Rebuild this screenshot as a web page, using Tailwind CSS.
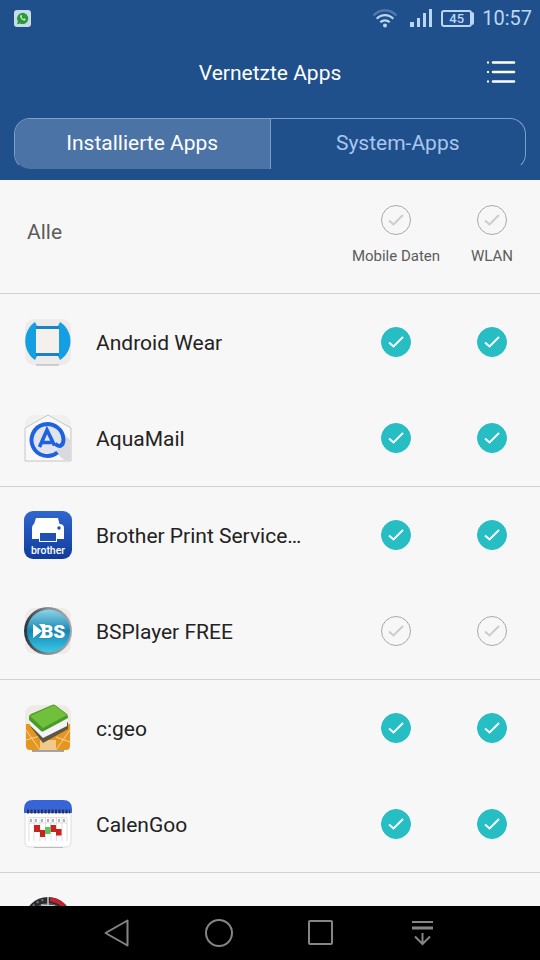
<!DOCTYPE html>
<html lang="de">
<head>
  <meta charset="UTF-8" />
  <meta name="viewport" content="width=device-width, initial-scale=1.0" />
  <title>Vernetzte Apps</title>
  <script src="https://cdn.jsdelivr.net/npm/@tailwindcss/browser@4"></script>
</head>
<body class="flex h-screen flex-col bg-[#f7f7f7] font-[Roboto,sans-serif] text-[#222222]">

  <!-- Header -->
  <header class="bg-[#1f508b] pb-[10px]">
    <!-- Status bar -->
    <div class="flex h-9 items-center justify-between pl-[14px] pr-2">
      <svg class="size-[17px]" viewBox="0 0 17 17">
        <rect width="17" height="17" rx="3" fill="#c8dcea" />
        <path d="M3 14.200 3.900 11.400A5.600 5.600 0 1 1 6 13.400Z" fill="#2b9a3a" />
        <path d="M6.300 5.500c-.6 2.300 2 5.200 4.600 5l.8-1.300-1.500-.9-.9.700c-.9-.4-1.500-1-1.800-1.900l.6-.8-.7-1.500Z" fill="#d9f0dc" />
      </svg>
      <div class="flex items-center gap-2 text-[#bcd6f7]">
        <svg class="mr-1 h-[19px] w-[26px]" viewBox="0 0 26 19" fill="none" stroke="currentColor" stroke-width="2.200">
          <path d="M1.500 6.500C8-.3 18-.3 24.500 6.500" stroke="#5379ad" />
          <path d="M4.700 9.800C9.500 5 16.500 5 21.300 9.800M8.300 13.300c2.700-2.700 6.700-2.700 9.400 0" />
          <circle cx="13" cy="16.500" r="2" fill="currentColor" stroke="none" />
        </svg>
        <svg class="h-[18px] w-[23px]" viewBox="0 0 23 18" fill="currentColor">
          <path d="M0 13h4v5H0zM7 9h3v9H7zM13 4h3v14h-3zM19 0h3v18h-3z" />
        </svg>
        <div class="flex items-center">
          <span class="flex h-[17px] w-[31px] items-center justify-center rounded-[3px] border-2 border-current text-[13px] leading-none font-medium">45</span>
          <span class="h-[13px] w-[2px] rounded-r bg-current"></span>
        </div>
        <span class="text-[20px] leading-6">10:57</span>
      </div>
    </div>

    <!-- Title bar -->
    <div class="grid h-[72px] grid-cols-[1fr_auto_1fr] items-center px-6">
      <h1 class="col-start-2 pt-[3px] text-[21px] text-white">Vernetzte Apps</h1>
      <button class="justify-self-end" aria-label="Menü">
        <svg class="h-6 w-[30px]" viewBox="0 0 30 24" fill="none" stroke="#fff" stroke-width="2.600">
          <path d="M1 2.500h2M1 12h2M1 21.500h2" stroke-width="2.200" />
          <path d="M7 2.500h21M7 12h21M7 21.500h21" stroke-linecap="round" />
        </svg>
      </button>
    </div>

    <!-- Tabs -->
    <div class="mx-[14px] mt-[10px] flex h-[52px] overflow-hidden rounded-2xl border border-[#7f9fcb] border-b-transparent text-[21px]" role="tablist">
      <button class="flex-1 border-r border-[#7f9fcb] bg-[#4b73a5] text-white" role="tab" aria-selected="true">Installierte Apps</button>
      <button class="flex-1 text-[#a9c6ee]" role="tab" aria-selected="false">System-Apps</button>
    </div>
  </header>

  <svg class="hidden">
    <symbol id="tick" viewBox="0 0 30 30">
      <path d="m8 15.500 4.500 4L22 10" fill="none" stroke="currentColor" stroke-width="2" />
    </symbol>
  </svg>

  <!-- App list -->
  <main class="min-h-0 flex-1 overflow-hidden">
    <table class="w-full table-fixed border-separate border-spacing-0 text-left">
      <colgroup>
        <col class="w-24" />
        <col />
        <col class="w-24" />
        <col class="w-24" />
      </colgroup>
      <thead class="text-[#5c5c5c]">
        <tr class="h-[114px]">
          <th class="border-b border-[#d2d2d2] pb-2 pl-[27px] text-[21px] font-normal" colspan="2">Alle</th>
          <th class="border-b border-[#d2d2d2] text-[15px] font-normal">
            <label class="flex flex-col items-center gap-[10px] whitespace-nowrap">
              <span class="grid">
                <input type="checkbox" class="peer col-start-1 row-start-1 size-[30px] appearance-none rounded-full border border-[#a8a8a8] checked:border-[#26bdc3] checked:bg-[#26bdc3]" />
                <svg class="pointer-events-none col-start-1 row-start-1 size-[30px] text-[#cccccc] peer-checked:text-white"><use href="#tick" /></svg>
              </span>
              Mobile Daten
            </label>
          </th>
          <th class="border-b border-[#d2d2d2] text-[15px] font-normal">
            <label class="flex flex-col items-center gap-[10px]">
              <span class="grid">
                <input type="checkbox" class="peer col-start-1 row-start-1 size-[30px] appearance-none rounded-full border border-[#a8a8a8] checked:border-[#26bdc3] checked:bg-[#26bdc3]" />
                <svg class="pointer-events-none col-start-1 row-start-1 size-[30px] text-[#cccccc] peer-checked:text-white"><use href="#tick" /></svg>
              </span>
              WLAN
            </label>
          </th>
        </tr>
      </thead>
      <tbody id="apps"></tbody>
    </table>
  </main>

  <!-- Navigation bar -->
  <nav class="grid h-[54px] grid-cols-4 items-center justify-items-center bg-black px-[66px] text-[#858585]">
    <button aria-label="Zurück">
      <svg class="size-7" viewBox="0 0 28 28" fill="none" stroke="currentColor" stroke-width="2" stroke-linejoin="round"><path d="M24.500 1.500v25L2.500 14Z" /></svg>
    </button>
    <button aria-label="Startseite">
      <svg class="size-7" viewBox="0 0 28 28" fill="none" stroke="currentColor" stroke-width="2"><circle cx="14" cy="14" r="13" /></svg>
    </button>
    <button aria-label="Übersicht">
      <svg class="size-7" viewBox="0 0 28 28" fill="none" stroke="currentColor" stroke-width="2"><rect x="2" y="2" width="23" height="23" rx="1" /></svg>
    </button>
    <button aria-label="Benachrichtigungen">
      <svg class="size-7" viewBox="0 0 28 28" fill="none" stroke="currentColor" stroke-width="2"><path d="M3 3h21" /><path d="M3 9h21" stroke-width="3" /><path d="M13.500 14v11M6 17.500l7.500 7.500 7.500-7.500" /></svg>
    </button>
  </nav>

  <script>
    const icons = {
      wear: `
        <rect x="1" y="1" width="46" height="46" rx="9" fill="#eeecea" />
        <path d="M12 47h23" stroke="#aaa" />
        <path d="M11 4C-2 13-2 33 11 42l2-4h21l2 4C50 33 50 13 36 4l-2 4H13Z" fill="#159fe3" />
        <path d="M12 8h23v3H12zM12 35h23v3H12z" fill="#1b82c4" />
        <rect x="12" y="11" width="23" height="24" fill="#f3f0ee" />`,
      mail: `
        <rect x="1" y="1" width="46" height="46" rx="9" fill="#f0f0ef" />
        <path d="M1 14 24 1l23 13v33H1Z" fill="#f8f8f8" stroke="#c6c6c6" />
        <path d="m34 14 12 12v20H40L28 35Z" fill="#d9dadd" />
        <circle cx="23.500" cy="25.500" r="14" fill="#e1e4ea" />
        <path d="M33.500 38.500A16 16 0 1 1 39.500 25.500c0 6.500-4.500 8.500-8.500 4" fill="none" stroke="#1f62e0" stroke-width="4" />
        <path d="M15.500 33 23 16l7.500 15.500M18.500 28.500h9" fill="none" stroke="#1f62e0" stroke-width="3.600" />`,
      brother: `
        <defs><linearGradient id="blue" x2="0" y2="1"><stop stop-color="#2f66cf" /><stop offset="1" stop-color="#103c9c" /></linearGradient></defs>
        <rect width="48" height="48" rx="9" fill="url(#blue)" />
        <path d="M12 7h22l1.500 6q4.500 0 4.500 4v11H8V18q0-4 2-5Z" fill="#fff" />
        <rect x="15.500" y="21.500" width="17" height="9" fill="#1f50b5" stroke="#fff" />
        <circle cx="35" cy="17" r="1.700" fill="#1f50b5" />
        <text x="24" y="43" font-family="Roboto" font-size="10.500" font-weight="500" text-anchor="middle" fill="#fff">brother</text>`,
      bs: `
        <defs>
          <linearGradient id="aqua" x2="0" y2="1"><stop stop-color="#8fd3e8" /><stop offset=".5" stop-color="#1587b3" /><stop offset="1" stop-color="#3cc8e8" /></linearGradient>
          <linearGradient id="rim"><stop stop-color="#26333b" /><stop offset=".5" stop-color="#8a8f92" /><stop offset="1" stop-color="#a5a5a5" /></linearGradient>
        </defs>
        <rect x="1" y="1" width="46" height="46" rx="9" fill="#eeebe8" />
        <circle cx="24" cy="24" r="24" fill="url(#rim)" />
        <circle cx="24.500" cy="24" r="21.500" fill="url(#aqua)" />
        <path d="m9 17 9 7-9 7Z" fill="#fff" />
        <path d="M15 17h6v14h-6l5-7Z" fill="#fff" />
        <text x="29" y="31" font-family="Roboto" font-size="19" font-weight="900" text-anchor="middle" fill="#fff">BS</text>`,
      geo: `
        <rect x="1" y="1" width="46" height="46" rx="9" fill="#eeebe5" />
        <path d="M2 20h44v22q0 4-4 4H6q-4 0-4-4Z" fill="#e5961f" />
        <path d="M16 36h16v10H16Z" fill="#f2c98a" />
        <path d="m2 36 14-4M2 26l14 20M32 33l14 5M46 26 32 46" stroke="#f7d6a0" fill="none" />
        <path d="M8 47h32" stroke="#555" />
        <path d="m6 22 13 17 25-14v-7L19 32Z" fill="#5d5643" />
        <path d="M5 15 19 26 43 13v9L19 34 6 21Z" fill="#f2f4f5" />
        <path d="M5 13q0-2 2-3L28 1q2-1 3 0l12 9q1 1 1 4L20 27q-2 1-3 0L5 16Z" fill="#4a9a28" />
        <path d="M6 12 28 2q2-1 3 0l12 9-24 13Z" fill="#70c03c" />`,
      calendar: `
        <path d="M1 11h46v31q0 5-5 5H6q-5 0-5-5Z" fill="#fff" stroke="#ddd" />
        <path d="M0 13V9q0-9 9-9h30q9 0 9 9v4Z" fill="#3765d8" />
        <path d="M3 11.500h43" stroke="#26335c" stroke-width="4" stroke-dasharray="2 1.500" />
        <path d="M5 17.500h38M5 23h38M5 18v23M10 18v23M16 18v23M21.500 18v23M27 18v23M32.500 18v23M38 18v23M43 18v23" stroke="#d2d2d2" stroke-width=".7" />
        <path d="M7 19v3M12 19v3M18 19v3M24 19v3M29 19v3M35 19v3M40 19v3" stroke="#999" stroke-width="1.500" />
        <path d="M10 25h6v7h-6zM16 30h5v7h-5zM26.500 25h5.500v7h-5.500zM32 29h5.500v6.500H32z" fill="#c8231c" />
        <path d="M21 27h5.500v7H21z" fill="#55c85a" />
        <path d="M10 47.500h29" stroke="#bbb" />`,
      gauge: `
        <circle cx="24" cy="24" r="24" fill="#2b2b2e" />
        <path d="M26 2.500A21.500 21.500 0 0 1 42 12" fill="none" stroke="#c4202f" stroke-width="4" />
        <path d="M6 13A21 21 0 0 1 22 2.500" fill="none" stroke="#777" stroke-dasharray="2 3" stroke-width="2" />
        <circle cx="24" cy="24" r="18" fill="#55585c" />
        <path d="M24 0v10M17 8l14 1" stroke="#ccc" stroke-width="1.500" />`,
    };

    const apps = [
      { name: 'Android Wear', icon: 'wear', on: true },
      { name: 'AquaMail', icon: 'mail', on: true },
      { name: 'Brother Print Service…', icon: 'brother', on: true },
      { name: 'BSPlayer FREE', icon: 'bs', on: false },
      { name: 'c:geo', icon: 'geo', on: true },
      { name: 'CalenGoo', icon: 'calendar', on: true },
      { name: '', icon: 'gauge', on: null },
    ];

    function checkCell(app, label, line) {
      if (app.on === null) return '<td></td>';
      return `
        <td class="${line}">
          <label class="mx-auto grid w-[30px]" aria-label="${app.name}: ${label}">
            <input type="checkbox" ${app.on ? 'checked' : ''} class="peer col-start-1 row-start-1 size-[30px] appearance-none rounded-full border border-[#a8a8a8] checked:border-[#26bdc3] checked:bg-[#26bdc3]">
            <svg class="pointer-events-none col-start-1 row-start-1 size-[30px] text-[#cccccc] peer-checked:text-white"><use href="#tick" /></svg>
          </label>
        </td>`;
    }

    // every second row closes with a line
    document.getElementById('apps').innerHTML = apps.map((app, i) => {
      const odd = i % 2 === 1;
      const line = odd ? 'border-b border-[#d2d2d2]' : '';
      return `
        <tr class="${odd ? 'h-[97px]' : 'h-24'}">
          <td class="${line}"><svg class="mx-auto size-12" viewBox="0 0 48 48">${icons[app.icon]}</svg></td>
          <td class="${line} truncate pt-1 text-[21px]">${app.name}</td>
          ${checkCell(app, 'Mobile Daten', line)}
          ${checkCell(app, 'WLAN', line)}
        </tr>`;
    }).join('');
  </script>
</body>
</html>
